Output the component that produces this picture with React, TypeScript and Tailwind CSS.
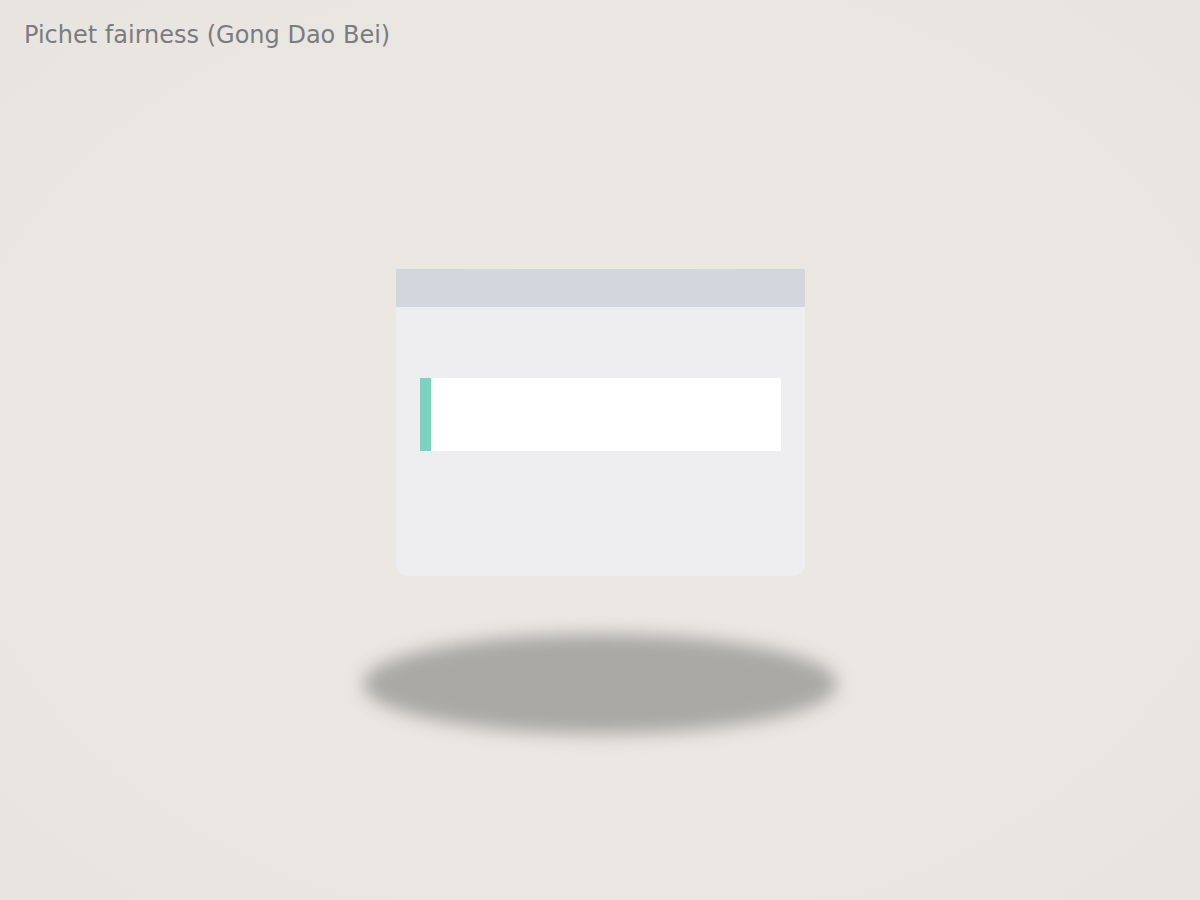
export default function App() {
  return (
    <div className="w-full h-[900px] overflow-hidden bg-[radial-gradient(ellipse_at_center,#ece9e5_0%,#eae7e2_60%,#e8e5e0_100%)] font-['DejaVu_Sans',sans-serif]">
      <div className="px-6 pt-[20px] text-[24px] leading-[30px] text-[#7b7c7e]">Pichet fairness (Gong Dao Bei)</div>
      <div className="mx-auto mt-[219px] w-[409px] h-[307px] rounded-b-[12px] bg-[#eeeef0] flex flex-col">
        <div className="h-[38px] bg-[#d3d7dd]" />
        <div className="mt-[71px] mx-6 h-[73px] bg-white flex">
          <div className="w-[11px] bg-[#7dd3c0]" />
        </div>
      </div>
      <div className="mx-auto mt-[58px] w-[474px] h-[100px] rounded-[50%] bg-[#a9a8a4] blur-[9px]" />
    </div>
  )
}
